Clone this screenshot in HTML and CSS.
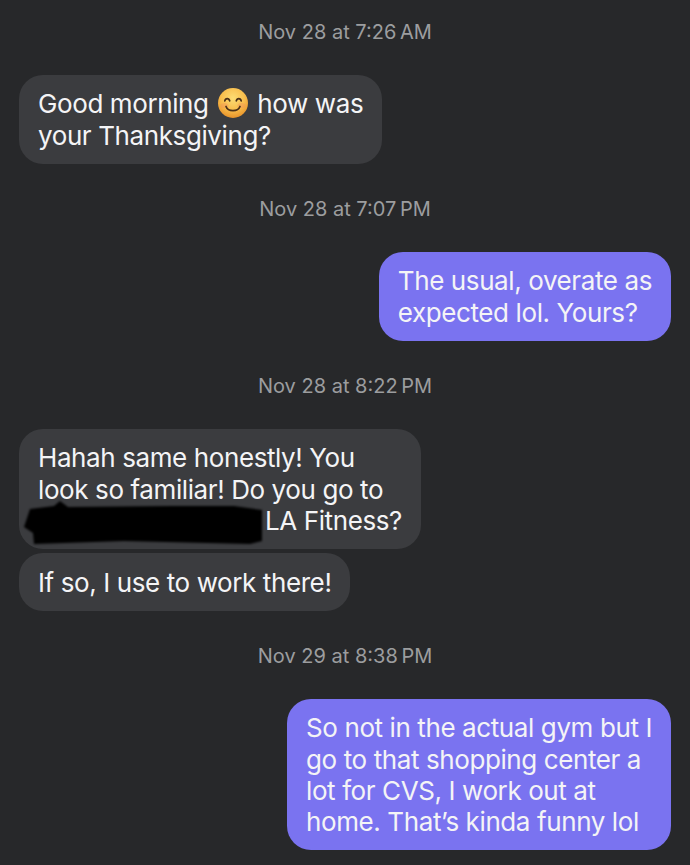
FILE: index.html
```html
<!DOCTYPE html>
<html lang="en">
<head>
    <meta charset="UTF-8">
    <meta name="viewport" content="width=device-width, initial-scale=1.0">
    <title>Messages</title>
    <link rel="stylesheet" href="styles.css">
</head>
<body>

    <div class="thread">
        <p class="stamp">Nov 28 at 7:26&#8201;AM</p>
        <div class="group">
            <div class="bubble them">Good morning
                <svg class="emoji" viewBox="0 0 30 30" aria-hidden="true">
                    <defs>
                        <radialGradient id="face" cx="50%" cy="34%" r="66%">
                            <stop offset="0" stop-color="#fcdc74"/>
                            <stop offset="0.6" stop-color="#f8bd4c"/>
                            <stop offset="1" stop-color="#e8932a"/>
                        </radialGradient>
                    </defs>
                    <circle cx="15" cy="15" r="15" fill="url(#face)"/>
                    <ellipse cx="6.500" cy="17.500" rx="4" ry="2.600" fill="#f2905a" opacity="0.4"/>
                    <ellipse cx="23.500" cy="17.500" rx="4" ry="2.600" fill="#f2905a" opacity="0.4"/>
                    <path d="M6.800 12.800c.6-3 4.200-3 4.900 0M18.300 12.800c.7-3 4.300-3 4.900 0" fill="none" stroke="#4a3018" stroke-width="1.700" stroke-linecap="round"/>
                    <path d="M8 18.500c2 5.500 12 5.500 14 0" fill="none" stroke="#4a3018" stroke-width="1.700" stroke-linecap="round"/>
                </svg>
                how was<br>your Thanksgiving?</div>
        </div>

        <p class="stamp">Nov 28 at 7:07&#8201;PM</p>
        <div class="group">
            <div class="bubble me">The usual, overate as<br>expected lol. Yours?</div>
        </div>

        <p class="stamp">Nov 28 at 8:22&#8201;PM</p>
        <div class="group">
            <div class="bubble them">Hahah same honestly! You<br>look so familiar! Do you go to<br><span class="redact"><svg class="scribble" viewBox="0 0 240 44" aria-hidden="true"><path d="M6 8 30 5 36 0 44 6 150 5 210 5 238 9 238 40 226 43 100 40 10 43 9 32 0 26z" fill="#000"/></svg></span>LA Fitness?</div>
            <div class="bubble them">If so, I use to work there!</div>
        </div>

        <p class="stamp">Nov 29 at 8:38&#8201;PM</p>
        <div class="group">
            <div class="bubble me">So not in the actual gym but I<br>go to that shopping center a<br>lot for CVS, I work out at<br>home. That&rsquo;s kinda funny lol</div>
        </div>
    </div>

</body>
</html>
```

FILE: styles.css
```css
html, body {
    margin: 0;
    height: 100%;
}

body {
    background-color: #27282a;
    font-family: 'Inter', 'Liberation Sans', sans-serif;
    overflow: hidden;
}

.thread {
    display: flex;
    flex-direction: column;
    gap: 31.5px;
    padding: 18.5px 19px 0;
}

.stamp {
    margin: 0;
    padding-top: 1px;
    color: #9c9d9f;
    font-size: 20px;
    line-height: 24px;
    text-align: center;
}

.group {
    display: flex;
    flex-direction: column;
    gap: 4px;
}

.bubble {
    position: relative;
    width: fit-content;
    padding: 13.3px 19px;
    border-radius: 24px;
    color: #f4f4f6;
    font-size: 26px;
    letter-spacing: -0.4px;
    line-height: 31.2px;
    white-space: nowrap;
    overflow: hidden;
}

.them {
    background-color: #3b3c3f;
}

.me {
    align-self: flex-end;
    background-color: #7a73f0;
}

.emoji {
    width: 30px;
    height: 30px;
    margin: 0 2.5px;
    vertical-align: -5px;
}

/* blacked out name, painted over the bubble */
.redact {
    position: relative;
    display: inline-block;
    width: 227px;
    height: 20px;
}

.scribble {
    position: absolute;
    left: -14px;
    top: -9px;
    width: 240px;
    height: 44px;
    filter: blur(0.8px);
}
```
